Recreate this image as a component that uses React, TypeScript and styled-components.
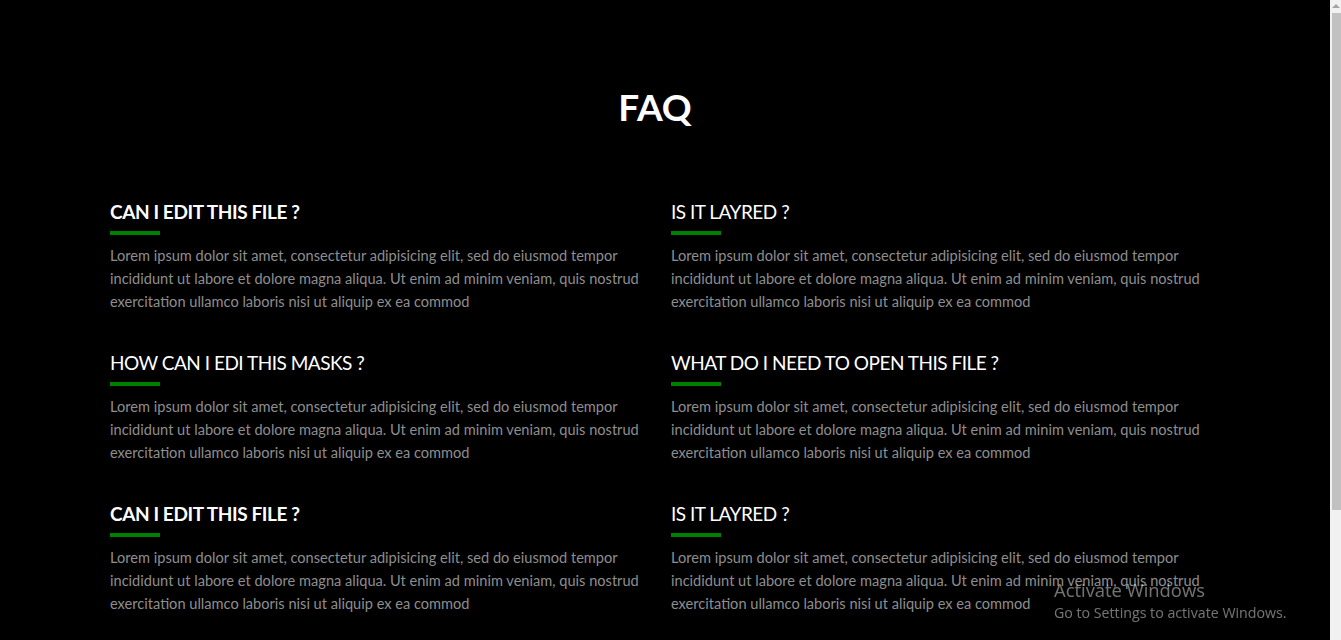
import React from "react";
import styled, { createGlobalStyle } from "styled-components";

const Global = createGlobalStyle`
  html, body { margin: 0; padding: 0; background: #000; }
  body { font-family: "Lato", "Noto Sans", sans-serif; overflow: hidden; }
  * { box-sizing: border-box; }
`;

const Shell = styled.div`
  display: flex;
  width: 1341px;
  height: 640px;
`;

const Page = styled.main`
  flex: 1;
  display: flex;
  flex-direction: column;
  background: #000;
  padding-top: 84px;
`;

const Title = styled.h1`
  margin: 0;
  width: 1310px;
  text-align: center;
  color: #fff;
  font-size: 37px;
  font-weight: 700;
  line-height: 46px;
`;

const Grid = styled.div`
  display: grid;
  grid-template-columns: 561px 561px;
  row-gap: 38px;
  padding-left: 110px;
  margin-top: 70px;
`;

const Item = styled.div`
  display: flex;
  flex-direction: column;
  width: 545px;
`;

const Question = styled.h3<{ $bold?: boolean }>`
  margin: 0;
  color: #fff;
  font-size: 19px;
  line-height: 24px;
  font-weight: ${(p) => (p.$bold ? 700 : 400)};
  letter-spacing: ${(p) => (p.$bold ? "-0.4px" : "-0.5px")};
`;

const Bar = styled.div`
  width: 50px;
  height: 4px;
  background: #008000;
  margin: 7px 0 9px;
`;

const Answer = styled.p`
  margin: 0;
  color: #8e8e8e;
  font-size: 14.6px;
  line-height: 23px;
`;

const Watermark = styled.div`
  position: fixed;
  left: 1054px;
  top: 579px;
  font-family: "Open Sans", "Noto Sans", sans-serif;
  color: rgba(255, 255, 255, 0.45);
  pointer-events: none;
`;

const WmTitle = styled.div`
  font-size: 18.4px;
  line-height: 22px;
`;

const WmSub = styled.div`
  font-size: 14.2px;
  line-height: 20px;
  margin-top: 2px;
`;

const Scrollbar = styled.div`
  width: 11px;
  flex-shrink: 0;
  display: flex;
  flex-direction: column;
  align-items: flex-end;
  padding-top: 4px;
  gap: 5px;
  background: #f1f1f1;
`;

const Thumb = styled.div`
  width: 9px;
  height: 497px;
  background: #c1c1c1;
`;

const Arrow = styled.div`
  align-self: center;
  width: 0;
  height: 0;
  border-left: 4px solid transparent;
  border-right: 4px solid transparent;
  border-bottom: 4px solid #a3a3a3;
`;

const LOREM =
  "Lorem ipsum dolor sit amet, consectetur adipisicing elit, sed do eiusmod tempor incididunt ut labore et dolore magna aliqua. Ut enim ad minim veniam, quis nostrud exercitation ullamco laboris nisi ut aliquip ex ea commod";

const faqs = [
  { q: "CAN I EDIT THIS FILE ?", bold: true },
  { q: "IS IT LAYRED ?", bold: false },
  { q: "HOW CAN I EDI THIS MASKS ?", bold: false },
  { q: "WHAT DO I NEED TO OPEN THIS FILE ?", bold: false },
  { q: "CAN I EDIT THIS FILE ?", bold: true },
  { q: "IS IT LAYRED ?", bold: false },
];

export default function App() {
  return (
    <>
      <Global />
      <Shell>
        <Page>
          <Title>FAQ</Title>
          <Grid>
            {faqs.map((f, i) => (
              <Item key={i}>
                <Question $bold={f.bold}>{f.q}</Question>
                <Bar />
                <Answer>{LOREM}</Answer>
              </Item>
            ))}
          </Grid>
        </Page>
        <Scrollbar>
          <Arrow />
          <Thumb />
        </Scrollbar>
      </Shell>
      <Watermark>
        <WmTitle>Activate Windows</WmTitle>
        <WmSub>Go to Settings to activate Windows.</WmSub>
      </Watermark>
    </>
  );
}
